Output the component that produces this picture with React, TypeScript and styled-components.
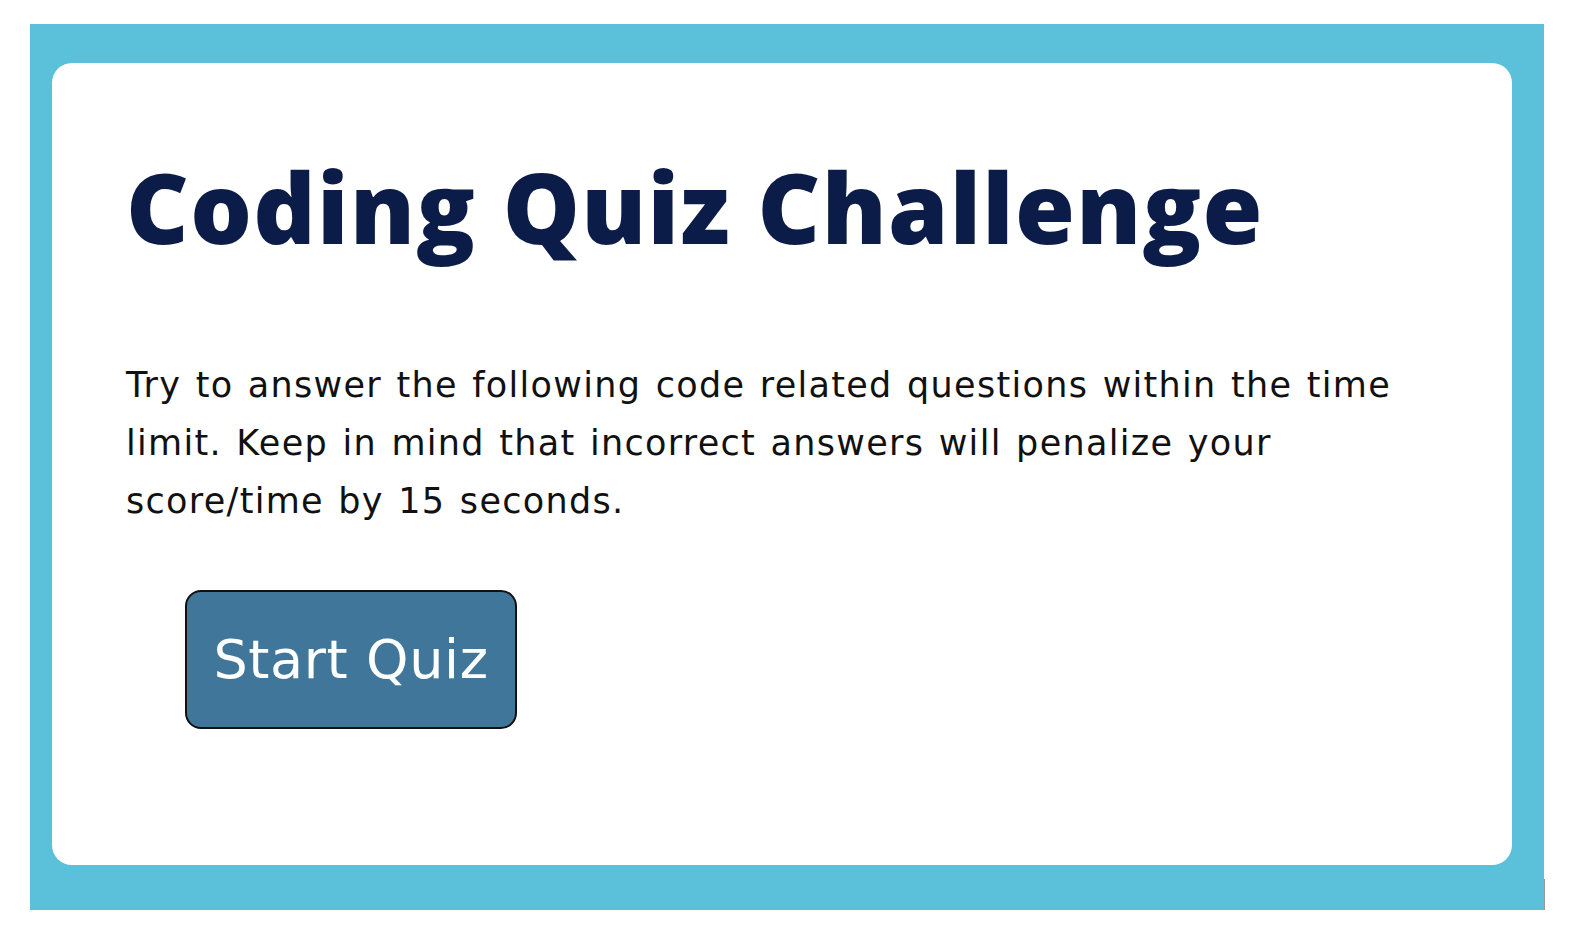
import React from "react";
import styled, { createGlobalStyle } from "styled-components";

const Global = createGlobalStyle`
  html, body { margin: 0; padding: 0; background: #ffffff; }
  body { font-family: "DejaVu Sans", "Open Sans", sans-serif; }
`;

const Frame = styled.div`
  position: relative;
  box-sizing: border-box;
  margin: 24px 0 0 30px;
  width: 1514px;
  height: 886px;
  background: #5bc1db;
  padding: 39px 32px 45px 22px;
  &::after {
    content: "";
    position: absolute;
    right: -1px;
    bottom: 0;
    width: 1px;
    height: 31px;
    background: #9a9a9a;
  }
`;

const Card = styled.div`
  box-sizing: border-box;
  height: 100%;
  background: #ffffff;
  border-radius: 20px;
  padding: 95px 74px 0 74px;
  display: flex;
  flex-direction: column;
  align-items: flex-start;
`;

const Title = styled.h1`
  margin: 0;
  font-family: "Open Sans", sans-serif;
  font-weight: 800;
  font-size: 97px;
  line-height: 1;
  color: #0b1c48;
  letter-spacing: 1.3px;
`;

const Text = styled.p`
  margin: 101px 0 0 0;
  font-family: "DejaVu Sans", sans-serif;
  font-weight: 400;
  font-size: 35px;
  line-height: 58px;
  color: #111111;
  letter-spacing: 1.3px;
  word-spacing: 2px;
  width: 1300px;
`;

const StartButton = styled.button`
  box-sizing: border-box;
  margin: 60px 0 0 59px;
  width: 332px;
  height: 139px;
  background: #3f7699;
  border: 2px solid #111111;
  border-radius: 16px;
  color: #ffffff;
  font-family: "DejaVu Sans", sans-serif;
  font-size: 54px;
  font-weight: 400;
  letter-spacing: 0.6px;
  padding: 0;
  cursor: pointer;
`;

export default function App() {
  return (
    <>
      <Global />
      <Frame>
        <Card>
          <Title>Coding Quiz Challenge</Title>
          <Text>
            Try to answer the following code related questions within the time
            limit. Keep in mind that incorrect answers will penalize your
            score/time by 15 seconds.
          </Text>
          <StartButton>Start Quiz</StartButton>
        </Card>
      </Frame>
    </>
  );
}
